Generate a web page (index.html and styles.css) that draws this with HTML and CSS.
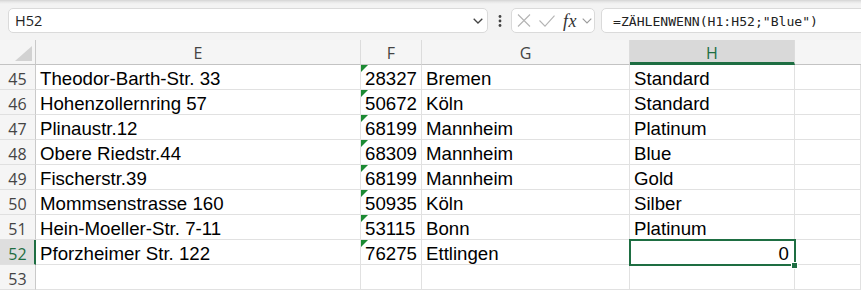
FILE: index.html
```html
<!DOCTYPE html>
<html lang="de">
<head>
<meta charset="utf-8">
<title>Excel</title>
<link rel="stylesheet" href="styles.css">
</head>
<body>
<div class="app">
  <div class="fbar">
    <div class="namebox">
      <span class="ref">H52</span>
      <svg class="chev-dark" width="10" height="6" viewBox="0 0 10 6"><polyline points="0.7,0.7 5,5 9.3,0.7" fill="none" stroke="#444" stroke-width="1.3"/></svg>
    </div>
    <div class="dots">
      <svg width="4" height="12" viewBox="0 0 4 12"><circle cx="2" cy="1.5" r="1.4" fill="#444"/><circle cx="2" cy="6" r="1.4" fill="#444"/><circle cx="2" cy="10.5" r="1.4" fill="#444"/></svg>
    </div>
    <div class="fxbox">
      <svg class="ico-x" width="14" height="13" viewBox="0 0 14 13"><path d="M1 0.5 L13 12.5 M13 0.5 L1 12.5" stroke="#b4b4b4" stroke-width="1.1" fill="none"/></svg>
      <svg class="ico-ok" width="16" height="12" viewBox="0 0 16 12"><polyline points="0.5,5.5 6,11.2 15.5,0.6" fill="none" stroke="#b4b4b4" stroke-width="1.1"/></svg>
      <span class="fx">fx</span>
      <svg class="chev-light" width="10" height="6" viewBox="0 0 10 6"><polyline points="0.7,0.7 5,5 9.3,0.7" fill="none" stroke="#9a9a9a" stroke-width="1.1"/></svg>
    </div>
    <div class="formula">=ZÄHLENWENN(H1:H52;"Blue")</div>
  </div>

  <div class="grid">
    <div class="corner"><svg width="18" height="16" viewBox="0 0 18 16"><polygon points="17,0 17,15 0,15" fill="#d2d2d2"/></svg></div>
    <div class="ch">E</div>
    <div class="ch">F</div>
    <div class="ch">G</div>
    <div class="ch sel">H</div>
    <div class="ch last"></div>

    <div class="rh">45</div><div class="c">Theodor-Barth-Str. 33</div><div class="c txtnum">28327</div><div class="c">Bremen</div><div class="c">Standard</div><div class="c"></div>
    <div class="rh">46</div><div class="c">Hohenzollernring 57</div><div class="c txtnum">50672</div><div class="c">Köln</div><div class="c">Standard</div><div class="c"></div>
    <div class="rh">47</div><div class="c">Plinaustr.12</div><div class="c txtnum">68199</div><div class="c">Mannheim</div><div class="c">Platinum</div><div class="c"></div>
    <div class="rh">48</div><div class="c">Obere Riedstr.44</div><div class="c txtnum">68309</div><div class="c">Mannheim</div><div class="c">Blue</div><div class="c"></div>
    <div class="rh">49</div><div class="c">Fischerstr.39</div><div class="c txtnum">68199</div><div class="c">Mannheim</div><div class="c">Gold</div><div class="c"></div>
    <div class="rh">50</div><div class="c">Mommsenstrasse 160</div><div class="c txtnum">50935</div><div class="c">Köln</div><div class="c">Silber</div><div class="c"></div>
    <div class="rh">51</div><div class="c">Hein-Moeller-Str. 7-11</div><div class="c txtnum">53115</div><div class="c">Bonn</div><div class="c">Platinum</div><div class="c"></div>
    <div class="rh sel">52</div><div class="c">Pforzheimer Str. 122</div><div class="c txtnum">76275</div><div class="c">Ettlingen</div><div class="c num active">0</div><div class="c"></div>
    <div class="rh">53</div><div class="c"></div><div class="c"></div><div class="c"></div><div class="c"></div><div class="c"></div>
  </div>
</div>
</body>
</html>
```

FILE: styles.css
```css
html, body {
  margin: 0;
  padding: 0;
  background: #ffffff;
  overflow: hidden;
}

.app {
  width: 861px;
  height: 291px;
  overflow: hidden;
}

/* ---------- formula bar ---------- */
.fbar {
  height: 40px;
  box-sizing: border-box;
  padding: 8px 0 7px 8px;
  display: flex;
  align-items: stretch;
  background: linear-gradient(#d4d4d4 0px, #e8e8e8 2px, #f3f3f3 4px, #f3f3f3 100%);
  font-family: "Open Sans", "Noto Sans", sans-serif;
}

.namebox {
  width: 480px;
  box-sizing: border-box;
  background: #fff;
  border: 1px solid #dadada;
  border-radius: 5px;
  display: flex;
  align-items: center;
  padding: 0 4px 0 6px;
}

.ref {
  flex: 1;
  font-size: 14.5px;
  line-height: 23px;
  color: #222;
}

.chev-dark {
  display: block;
}

.dots {
  width: 23px;
  display: flex;
  align-items: center;
  justify-content: center;
}

.dots svg { display: block; }

.fxbox {
  width: 84px;
  box-sizing: border-box;
  background: #fff;
  border: 1px solid #dadada;
  border-radius: 5px;
  display: flex;
  align-items: center;
  padding-left: 5px;
}

.ico-x { display: block; margin-right: 8px; }
.ico-ok { display: block; margin-right: 8px; margin-top: 1px; }

.fx {
  font-family: "Liberation Serif", "DejaVu Serif", serif;
  font-style: italic;
  font-size: 18px;
  line-height: 20px;
  color: #333;
  margin-right: 5px;
  letter-spacing: 0.5px;
}

.chev-light { display: block; }

.formula {
  flex: 1;
  margin-left: 6px;
  margin-right: -12px;
  box-sizing: border-box;
  background: #fff;
  border: 1px solid #dadada;
  border-radius: 5px;
  padding: 2px 0 0 11px;
  font-family: "DejaVu Sans Mono", "Liberation Mono", monospace;
  font-size: 13.1px;
  line-height: 21px;
  color: #222;
  white-space: nowrap;
}

/* ---------- grid ---------- */
.grid {
  display: grid;
  grid-template-columns: 36px 325px 61px 208px 165px 1fr;
  grid-auto-rows: 25px;
}

.corner {
  background: #f5f5f5;
  border-right: 1px solid #c9c9c9;
  border-bottom: 1px solid #c3c3c3;
  box-sizing: border-box;
  display: flex;
  align-items: flex-end;
  justify-content: flex-end;
  padding: 0 2px 2px 0;
}

.corner svg { display: block; }

.ch {
  background: #f5f5f5;
  border-right: 1px solid #dcdcdc;
  border-bottom: 1px solid #c3c3c3;
  box-sizing: border-box;
  text-align: center;
  font-family: "Open Sans", "Noto Sans", sans-serif;
  font-size: 16px;
  line-height: 22px;
  padding-top: 2px;
  color: #444;
}

.ch.last { border-right: none; }

.ch.sel {
  background: #d9d9d9;
  color: #1e6e42;
  border-bottom: 3px solid #1e6e42;
}

.rh {
  background: #f5f5f5;
  border-right: 1px solid #c9c9c9;
  border-bottom: 1px solid #e0e0e0;
  box-sizing: border-box;
  text-align: center;
  font-family: "Open Sans", "Noto Sans", sans-serif;
  font-size: 16px;
  line-height: 20px;
  padding-top: 4px;
  color: #444;
}

.rh.sel {
  background: #dedede;
  color: #1e6e42;
  border-right: 2px solid #1e6e42;
  padding-left: 1px;
}

.c {
  position: relative;
  border-right: 1px solid #e1e1e1;
  border-bottom: 1px solid #e1e1e1;
  box-sizing: border-box;
  padding: 4px 4px 0 4px;
  font-family: "Liberation Sans", Arial, sans-serif;
  font-size: 18.67px;
  line-height: 20px;
  color: #000;
  white-space: nowrap;
}

.c.num { text-align: right; padding-right: 5px; }

.txtnum::before {
  content: "";
  position: absolute;
  left: 0;
  top: 0;
  width: 0;
  height: 0;
  border-top: 7px solid #1b8a32;
  border-right: 7px solid transparent;
}

.active::after {
  content: "";
  position: absolute;
  top: -1px;
  left: -1px;
  right: -2px;
  bottom: -2px;
  border: 2px solid #1e6e42;
  z-index: 2;
}

.active::before {
  content: "";
  position: absolute;
  right: -3px;
  bottom: -4px;
  width: 5px;
  height: 5px;
  background: #1e6e42;
  outline: 1px solid #ffffff;
  z-index: 3;
}
```
